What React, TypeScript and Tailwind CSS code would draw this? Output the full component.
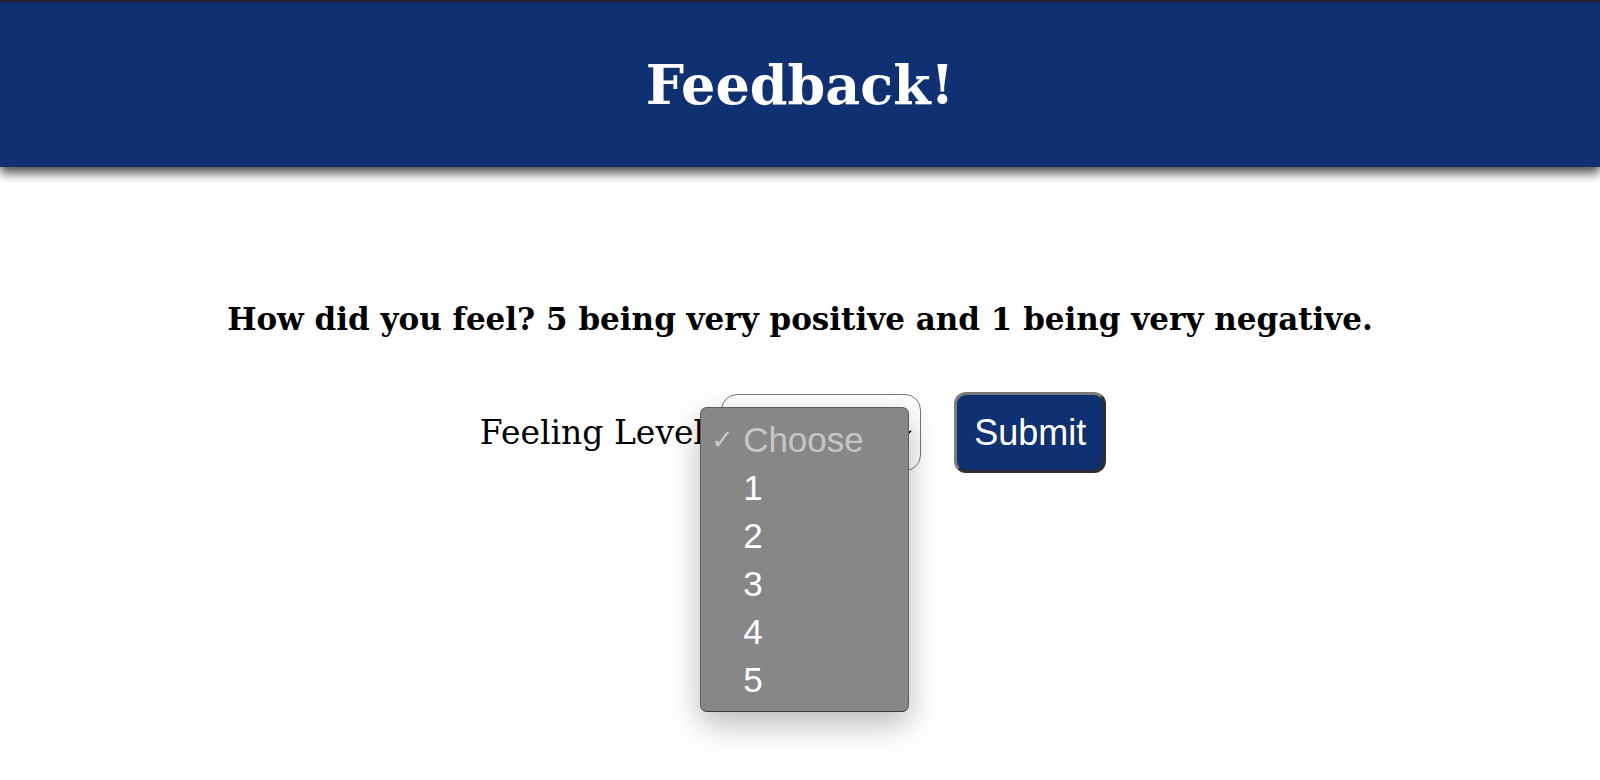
import { ChevronDown } from "lucide-react";

const options = ["1", "2", "3", "4", "5"];

function OpenSelect() {
  return (
    <div className="relative">
      {/* closed select box */}
      <div className="w-[200px] h-[77px] rounded-[16px] border border-[#7a7a7a] bg-white flex items-center justify-end pr-[6px]">
        <ChevronDown className="w-[14px] h-[14px] text-black" strokeWidth={3} />
      </div>

      {/* native option list, opened */}
      <div className="absolute left-[-21px] top-[13px] w-[209px] h-[305px] rounded-[7px] border border-[#5e5e5e] border-b-[#3a3a3a] bg-[#878787] shadow-[0_12px_32px_rgba(0,0,0,0.28)] pt-[8px] font-['Liberation_Sans',Arial,sans-serif] text-[35px] leading-[48px]">
        <div className="flex items-center h-[48px]">
          <span className="w-[42px] pl-[10px] text-[27px] text-[#c6c6c6]">✓</span>
          <span className="text-[#c6c6c6]">Choose</span>
        </div>
        {options.map((o) => (
          <div key={o} className="flex items-center h-[48px]">
            <span className="w-[42px]" />
            <span className="text-white">{o}</span>
          </div>
        ))}
      </div>
    </div>
  );
}

export default function App() {
  return (
    <div className="min-h-[780px] bg-white font-['DejaVu_Serif',serif]">
      <div className="h-[2px] bg-[#262626]" />
      <header className="h-[165px] bg-[#0f3172] flex items-center justify-center shadow-[0_6px_10px_rgba(0,0,0,0.7)] relative">
        <h1 className="text-white font-bold text-[54px] leading-none">Feedback!</h1>
      </header>

      <main className="flex flex-col items-center pt-[132px]">
        <p className="font-bold text-[31px] leading-[40px] text-black">
          How did you feel? 5 being very positive and 1 being very negative.
        </p>

        <div className="flex items-center mt-[53px] pr-[14px]">
          <label className="text-[33px] text-black mr-[17px]">Feeling Level</label>
          <OpenSelect />
          <button className="ml-[33px] bg-[#0f3172] text-white font-['Liberation_Sans',Arial,sans-serif] text-[36px] leading-[41px] px-[17px] py-[17px] rounded-[12px] border-[3px] border-t-[#7a7a7a] border-l-[#7a7a7a] border-r-[#2e2e2e] border-b-[#2e2e2e]">
            Submit
          </button>
        </div>
      </main>
    </div>
  );
}
